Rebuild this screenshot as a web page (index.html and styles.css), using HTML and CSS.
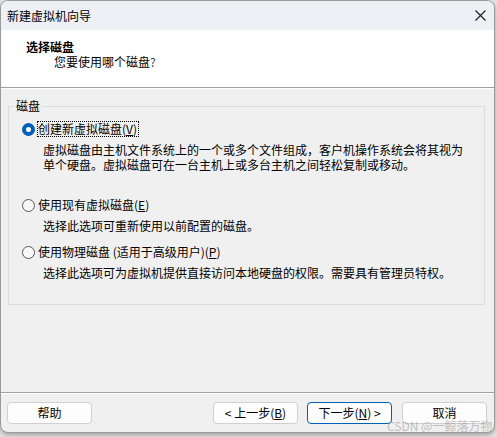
FILE: index.html
```html
<!DOCTYPE html>
<html lang="zh-CN">
<head>
<meta charset="utf-8">
<title>新建虚拟机向导</title>
<link rel="stylesheet" href="styles.css">
</head>
<body>
<div class="window">
  <div class="titlebar">
    <span class="title">新建虚拟机向导</span>
    <svg class="close" width="11" height="11" viewBox="0 0 11 11"><path d="M0.5 0.5 L10.5 10.5 M10.5 0.5 L0.5 10.5" stroke="#1a1a1a" stroke-width="1.1" fill="none"/></svg>
  </div>
  <div class="header">
    <div class="h-title">选择磁盘</div>
    <div class="h-sub">您要使用哪个磁盘<span class="q">?</span></div>
  </div>
  <div class="content">
    <fieldset class="group">
      <legend>磁盘</legend>
      <div class="option first">
        <span class="radio checked"></span>
        <span class="label focus">创建新虚拟磁盘(<u>V</u>)</span>
      </div>
      <div class="desc"><div class="line">虚拟磁盘由主机文件系统上的一个或多个文件组成，客户机操作系统会将其视为</div><div class="line">单个硬盘。虚拟磁盘可在一台主机上或多台主机之间轻松复制或移动。</div></div>
      <div class="option second">
        <span class="radio"></span>
        <span class="label">使用现有虚拟磁盘(<u>E</u>)</span>
      </div>
      <div class="desc"><div class="line">选择此选项可重新使用以前配置的磁盘。</div></div>
      <div class="option third">
        <span class="radio"></span>
        <span class="label">使用物理磁盘 (适用于高级用户)(<u>P</u>)</span>
      </div>
      <div class="desc"><div class="line">选择此选项可为虚拟机提供直接访问本地硬盘的权限。需要具有管理员特权。</div></div>
    </fieldset>
  </div>
  <div class="footer">
    <button class="btn">帮助</button>
    <span class="spacer"></span>
    <button class="btn">&lt; 上一步(<u>B</u>)</button>
    <button class="btn primary">下一步(<u>N</u>) &gt;</button>
    <button class="btn cancel">取消</button>
  </div>
  <div class="watermark">CSDN @一鲸落万物生网</div>
</div>
</body>
</html>
```
FILE: styles.css
```css
html, body {
  margin: 0;
  padding: 0;
  overflow: hidden;
}
body {
  background: #e4e4e4;
  width: 497px;
  height: 437px;
  font-family: "Noto Sans CJK SC", "Liberation Sans", sans-serif;
  font-size: 12px;
  color: #000;
}
.window {
  position: relative;
  box-sizing: border-box;
  width: 495px;
  height: 433px;
  border: 1px solid #9a9a9a;
  border-radius: 8px;
  overflow: hidden;
  background: #f0f0f0;
  display: flex;
  flex-direction: column;
  box-shadow: 0 2px 5px rgba(0, 0, 0, 0.3);
}
.titlebar {
  height: 29px;
  flex: none;
  background: #eef0f5;
  display: flex;
  align-items: center;
  justify-content: space-between;
  padding: 0 8px 0 6px;
}
.title {
  line-height: 14px;
}
.close {
  display: block;
}
.header {
  flex: none;
  height: 57px;
  background: #fff;
  border-bottom: 1px solid #a0a0a0;
  box-sizing: content-box;
}
.h-title {
  font-weight: bold;
  line-height: 14px;
  margin: 10px 0 0 25px;
}
.h-sub {
  line-height: 14px;
  margin: 1px 0 0 53px;
}
.q { color: #3b3b4f; }
.content {
  flex: 1;
  border-top: 1px solid #fff;
  padding: 10px 9px 0 7px;
}
.group {
  margin: 0;
  padding: 0 0 24px 0;
  border: 1px solid #dcdcdc;
  min-width: 0;
}
.group legend {
  margin-left: 5px;
  padding: 0 2px;
  line-height: 14px;
  height: 14px;
}
.option {
  display: flex;
  align-items: center;
  height: 16px;
  padding-left: 13px;
}
.option.first { margin-top: 8px; }
.option.second { margin-top: 25px; }
.option.third { margin-top: 11px; }
.radio {
  box-sizing: border-box;
  width: 13px;
  height: 13px;
  border-radius: 50%;
  border: 1px solid #5a5a5a;
  background: #f8f8f8;
  flex: none;
  margin-right: 2px;
}
.radio.checked {
  border: 4px solid #005fb8;
  background: #fff;
}
.label {
  line-height: 14px;
  border: 1px dotted transparent;
  padding: 0 1px 0 0;
}
.label.focus {
  border-color: #000;
}
.desc {
  margin-top: 5px;
  padding-left: 34px;
}
.line {
  height: 15px;
  line-height: 14px;
  padding-top: 1px;
  box-sizing: border-box;
}
u {
  text-decoration: underline;
  text-underline-offset: 1px;
}
.footer {
  flex: none;
  height: 30px;
  border-top: 1px solid #a0a0a0;
  box-shadow: inset 0 1px 0 #fff;
  padding: 9px 7px 0 6px;
  display: flex;
  align-items: flex-start;
}
.spacer { flex: 1; }
.btn {
  box-sizing: border-box;
  width: 85px;
  height: 22px;
  background: #fdfdfd;
  border: 1px solid #d0d0d0;
  border-radius: 4px;
  font-family: "Noto Sans CJK SC", "Liberation Sans", sans-serif;
  font-size: 12px;
  line-height: 14px;
  color: #000;
  padding: 0;
  margin: 0;
}
.btn.primary {
  border-color: #005fb8;
  margin-left: 9px;
}
.btn.cancel {
  margin-left: 10px;
}
.watermark {
  position: absolute;
  left: 386px;
  top: 419px;
  font-size: 12px;
  line-height: 12px;
  white-space: nowrap;
  color: rgba(140, 140, 140, 0.5);
}
```
